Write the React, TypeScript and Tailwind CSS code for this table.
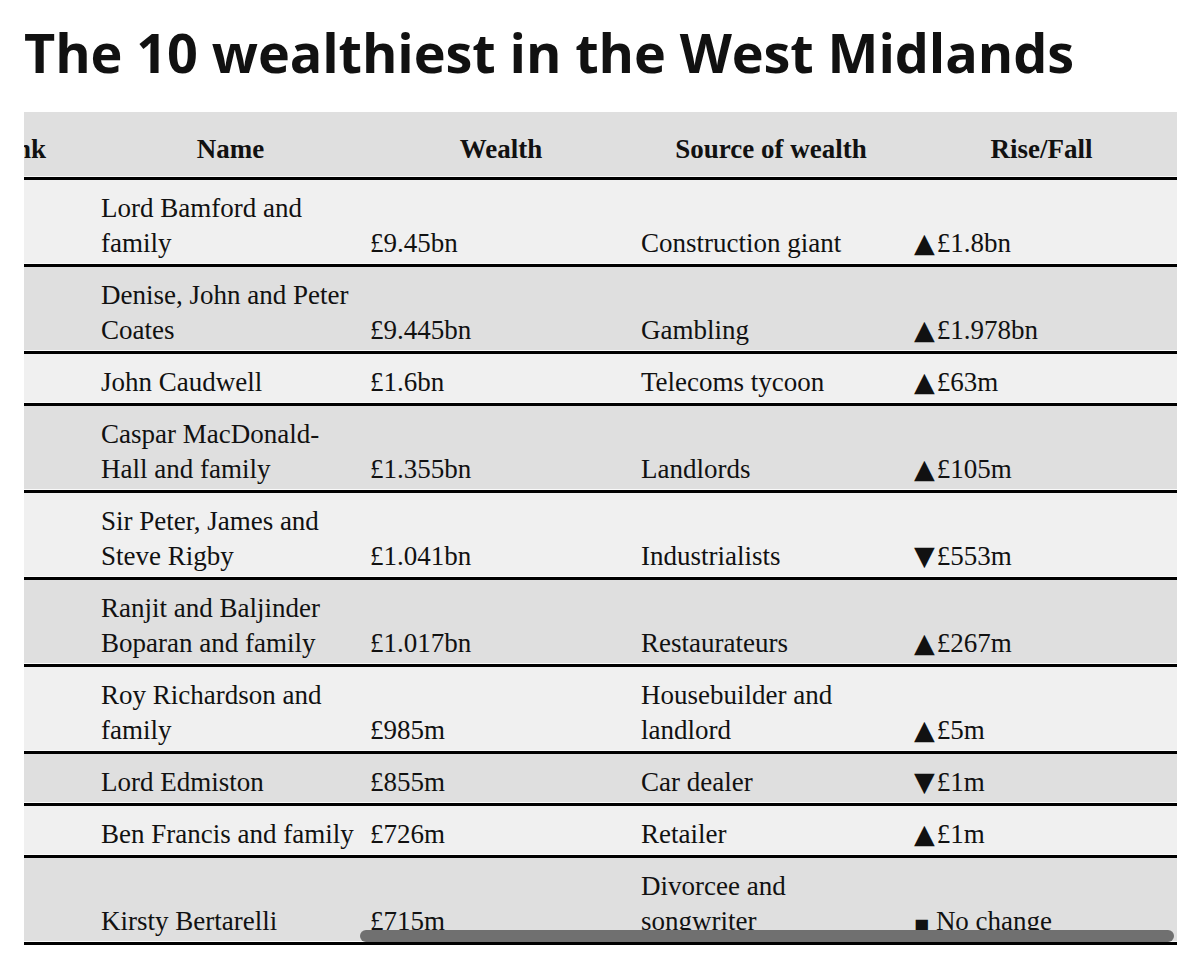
import { useEffect, useRef } from "react";

type Row = {
  name: string;
  wealth: string;
  source: string;
  change: string;
  dir: "up" | "down" | "same";
};

const rows: Row[] = [
  { name: "Lord Bamford and family", wealth: "£9.45bn", source: "Construction giant", change: "£1.8bn", dir: "up" },
  { name: "Denise, John and Peter Coates", wealth: "£9.445bn", source: "Gambling", change: "£1.978bn", dir: "up" },
  { name: "John Caudwell", wealth: "£1.6bn", source: "Telecoms tycoon", change: "£63m", dir: "up" },
  { name: "Caspar MacDonald-Hall and family", wealth: "£1.355bn", source: "Landlords", change: "£105m", dir: "up" },
  { name: "Sir Peter, James and Steve Rigby", wealth: "£1.041bn", source: "Industrialists", change: "£553m", dir: "down" },
  { name: "Ranjit and Baljinder Boparan and family", wealth: "£1.017bn", source: "Restaurateurs", change: "£267m", dir: "up" },
  { name: "Roy Richardson and family", wealth: "£985m", source: "Housebuilder and landlord", change: "£5m", dir: "up" },
  { name: "Lord Edmiston", wealth: "£855m", source: "Car dealer", change: "£1m", dir: "down" },
  { name: "Ben Francis and family", wealth: "£726m", source: "Retailer", change: "£1m", dir: "up" },
  { name: "Kirsty Bertarelli", wealth: "£715m", source: "Divorcee and songwriter", change: "No change", dir: "same" },
];

function Change({ row }: { row: Row }) {
  if (row.dir === "same") {
    return (
      <span>
        <span className="font-['DejaVu_Sans',sans-serif] text-[16px] leading-[0]">■</span> {row.change}
      </span>
    );
  }
  return (
    <span>
      <span className="mr-[2px] font-['DejaVu_Sans',sans-serif] text-[27px] leading-[0]">
        {row.dir === "up" ? "▲" : "▼"}
      </span>
      {row.change}
    </span>
  );
}

export default function App() {
  const scroller = useRef<HTMLDivElement>(null);

  useEffect(() => {
    const el = scroller.current;
    if (el) el.scrollLeft = el.scrollWidth;
  }, []);

  const th = "px-[6px] pb-[10px] pt-[20px] text-center align-bottom font-bold shadow-[inset_0_-1px_0_#f7f7f7]";
  const td = "pb-[3px] pt-[11px] text-left align-bottom shadow-[inset_0_-1px_0_#fafafa]";

  return (
    <div className="min-h-[955px] bg-white pl-[24px] pr-[23px] pt-[15px] text-[#111]">
      <h1 className="font-['Open_Sans',sans-serif] text-[54px] font-bold leading-[74px] tracking-[-0.1px]">
        The 10 wealthiest in the West Midlands
      </h1>

      <div className="relative mt-[23px]">
        <div ref={scroller} className="overflow-x-auto [scrollbar-width:none]">
          <table className="w-[1243px] table-fixed border-collapse font-['Liberation_Serif','Times_New_Roman',serif] text-[27px] leading-[35px]">
            <colgroup>
              <col className="w-[161px]" />
              <col className="w-[271px]" />
              <col className="w-[270px]" />
              <col className="w-[270px]" />
              <col className="w-[271px]" />
            </colgroup>
            <thead>
              <tr className="border-b-[3px] border-black bg-[#dfdfdf]">
                <th className={th}>Rank</th>
                <th className={th}>Name</th>
                <th className={th}>Wealth</th>
                <th className={th}>Source of wealth</th>
                <th className={th}>Rise/Fall</th>
              </tr>
            </thead>
            <tbody>
              {rows.map((row, i) => (
                <tr
                  key={row.name}
                  className={`border-b-[3px] border-black ${i % 2 === 0 ? "bg-[#f0f0f0]" : "bg-[#dfdfdf]"}`}
                >
                  <td className={`${td} px-[6px]`}>{i + 1}</td>
                  <td className={`${td} pl-[6px] pr-[4px]`}>{row.name}</td>
                  <td className={`${td} pl-[4px] pr-[6px]`}>{row.wealth}</td>
                  <td className={`${td} pl-[5px] pr-[6px]`}>{row.source}</td>
                  <td className={`${td} pl-[8px] pr-[6px]`}>
                    <Change row={row} />
                  </td>
                </tr>
              ))}
            </tbody>
          </table>
        </div>
        {/* overlay scrollbar thumb, scrolled to the far right */}
        <div className="pointer-events-none absolute bottom-[3px] left-[336px] right-[3px] h-[12px] rounded-full bg-[#707070]" />
      </div>
    </div>
  );
}
